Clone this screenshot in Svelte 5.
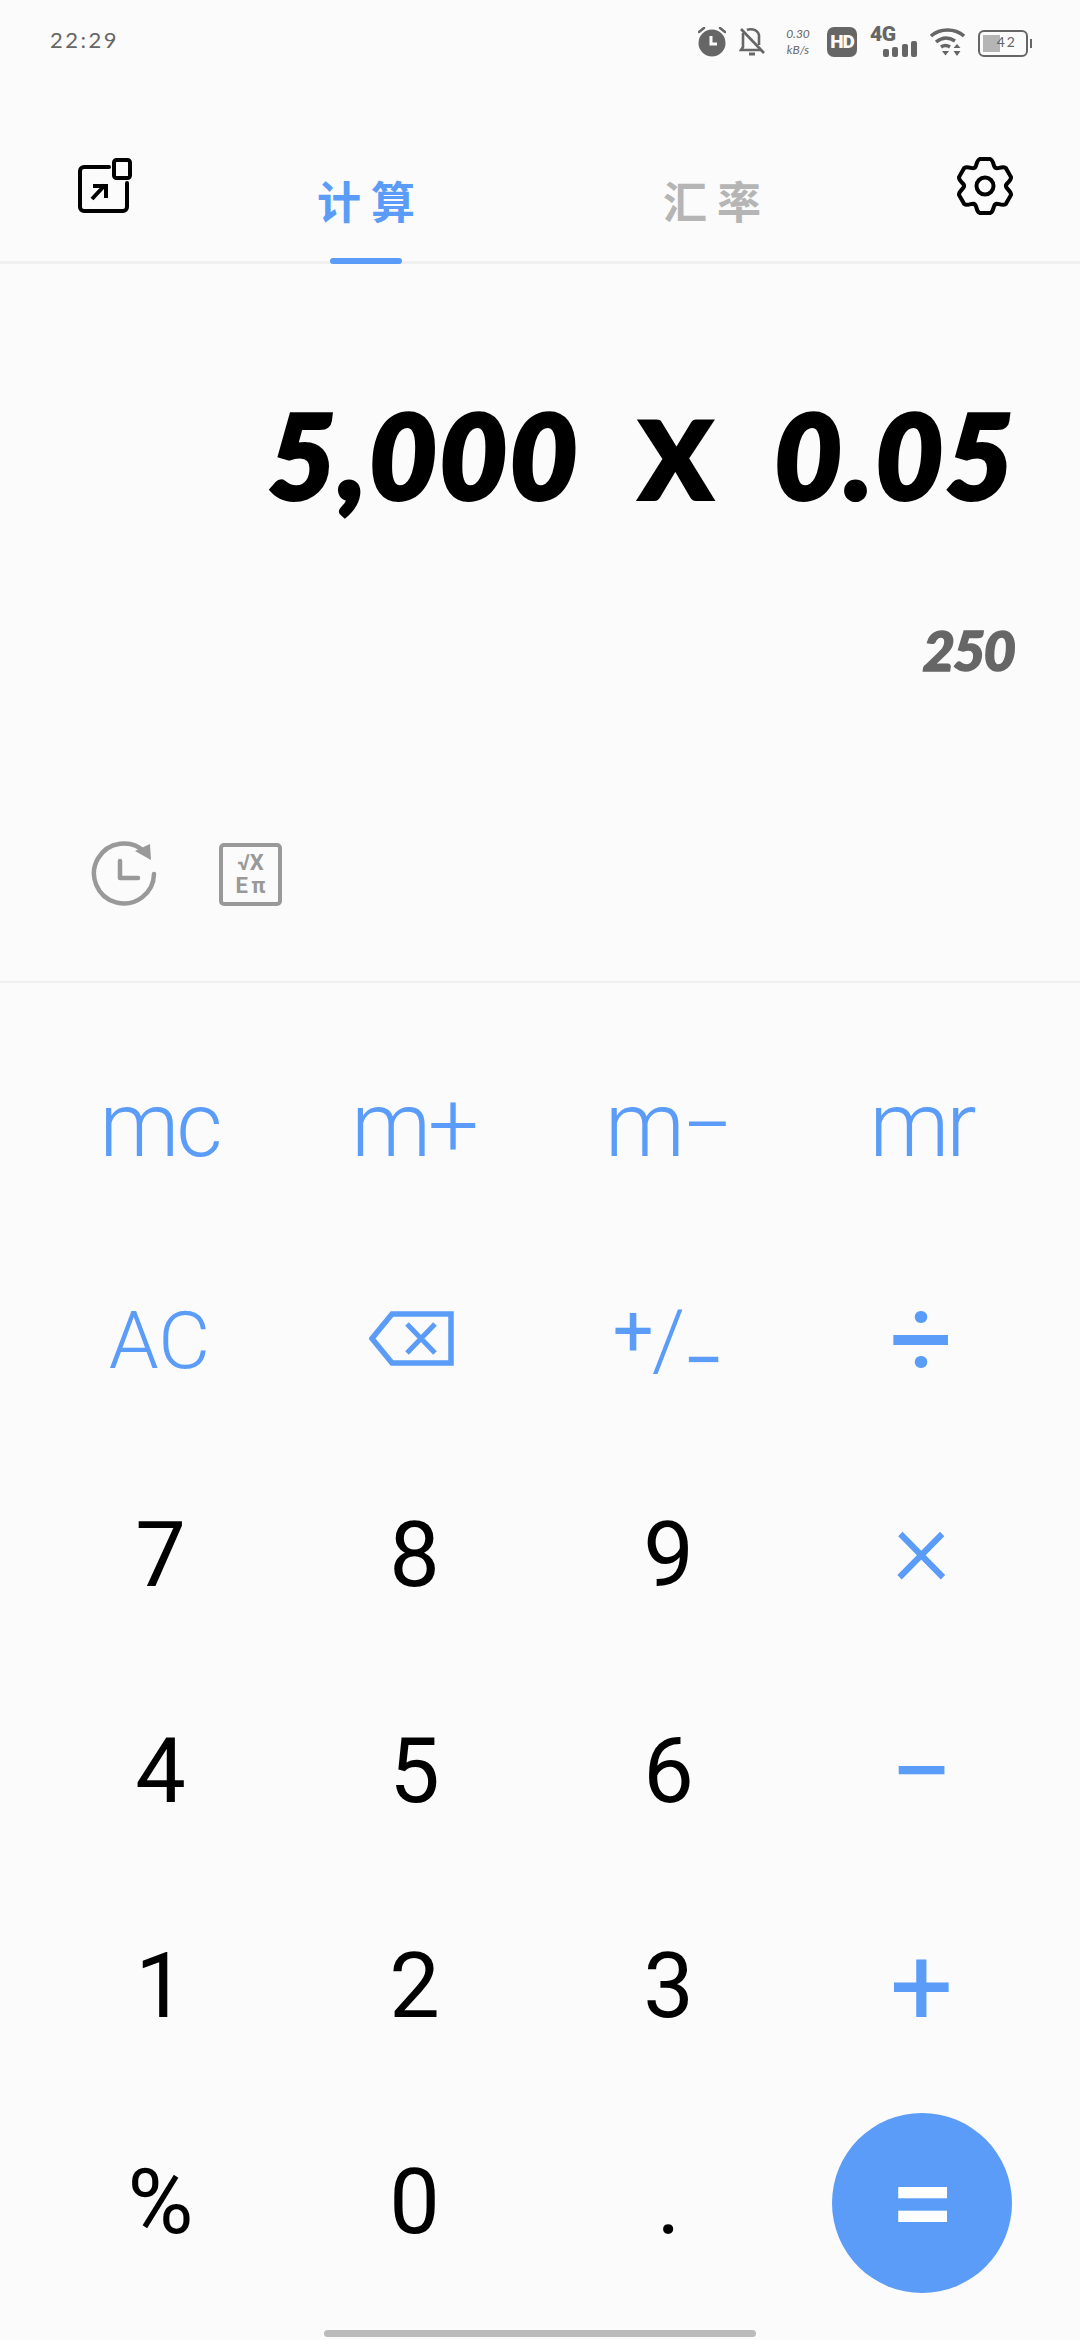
<script>
  const rows = [
    [['mc', 'blue thin'], ['m+', 'blue thin'], ['m−', 'blue thin'], ['mr', 'blue thin']],
    [['AC', 'blue ac'], ['back', 'blue'], ['sign', 'blue'], ['÷', 'blue op divide']],
    [['7', ''], ['8', ''], ['9', ''], ['×', 'blue op times']],
    [['4', ''], ['5', ''], ['6', ''], ['−', 'blue op']],
    [['1', ''], ['2', ''], ['3', ''], ['+', 'blue op']],
    [['%', ''], ['0', ''], ['.', ''], ['=', 'equals']]
  ];

  const polar = (deg, r) => {
    const a = (deg * Math.PI) / 180;
    return `${(30 + r * Math.cos(a)).toFixed(2)} ${(30 + r * Math.sin(a)).toFixed(2)}`;
  };

  // six rounded teeth, one pointing straight up
  let gear = `M${polar(-120, 21)}`;
  for (let i = 0; i < 6; i++) {
    const a = -90 + i * 60;
    gear += ` C${polar(a - 24, 20)} ${polar(a - 20, 27)} ${polar(a - 11, 27.5)}`;
    gear += ` L${polar(a + 11, 27.5)}`;
    gear += ` C${polar(a + 20, 27)} ${polar(a + 24, 20)} ${polar(a + 30, 21)}`;
  }
  gear += ' Z';
</script>

<div class="screen">
  <div class="status">
    <span class="time">22:29</span>
    <div class="status-icons">
      <svg width="28" height="30" viewBox="0 0 28 30">
        <circle cx="14" cy="16" r="13.5" fill="#666" />
        <path d="M1 5l5-4M27 5l-5-4" stroke="#666" stroke-width="2.5" stroke-linecap="round" />
        <path d="M13 9v8h6" stroke="#fbfbfb" stroke-width="3" fill="none" />
      </svg>
      <svg width="26" height="30" viewBox="0 0 26 30" fill="none" stroke="#666" stroke-width="2.6">
        <path d="M4 6v14l-2 3h20M8 3c2-1 10-2 12 5v10" />
        <path d="M2 2l23 24" />
        <path d="M10 27h6" stroke-width="3" />
      </svg>
      <div class="speed"><span>0.30</span><span>kB/s</span></div>
      <div class="hd">HD</div>
      <div class="net">
        <span class="four-g">4G</span>
        <div class="bars">
          <i style="height: 8px"></i>
          <i style="height: 10px"></i>
          <i style="height: 13px"></i>
          <i style="height: 16px"></i>
        </div>
      </div>
      <svg width="35" height="30" viewBox="0 0 35 30" fill="none" stroke="#666" stroke-width="3.4">
        <path d="M1 9c9-8 24-8 33 0M6 15c6-5 13-5 19-1M11 20c3-2 6-2 9 0" />
        <path d="M12 24h7l-3.5 4.500z" fill="#666" stroke="none" />
        <path d="M27 17l3.500 4h-7zM23.500 24h7l-3.500 5z" fill="#666" stroke="none" />
      </svg>
      <div class="battery">
        <div class="cell"><div class="level"></div><span>42</span></div>
        <div class="nub"></div>
      </div>
    </div>
  </div>

  <header>
    <svg class="float-icon" width="54" height="55" viewBox="0 0 54 55" fill="none" stroke="#000" stroke-width="4">
      <path d="M31 9H6a4 4 0 0 0-4 4v36a4 4 0 0 0 4 4h39a4 4 0 0 0 4-4V25" stroke-linecap="round" />
      <rect x="36" y="2" width="16" height="18" rx="2.500" />
      <path d="M14 41l13-14M15 28h13v12" />
    </svg>
    <div class="tab active">
      <span class="tab-label">计算</span>
      <div class="indicator"></div>
    </div>
    <div class="tab">
      <span class="tab-label">汇率</span>
    </div>
    <svg class="gear" width="60" height="60" viewBox="0 0 60 60" fill="none" stroke="#000" stroke-width="4">
      <path d={gear} />
      <circle cx="30" cy="30" r="8.500" />
    </svg>
  </header>

  <section class="display">
    <div class="expression">5,000 <span class="multiply">X</span> 0.05</div>
    <div class="result">250</div>
    <div class="tools">
      <svg width="66" height="66" viewBox="0 0 66 66" fill="none" stroke="#999" stroke-width="4.500">
        <path d="M63 33a30 30 0 1 1-9-22" stroke-linecap="round" />
        <path d="M60 19l-1-16-15 7z" fill="#999" stroke="none" />
        <path d="M29 20v17h18" stroke-width="4.500" stroke-linecap="round" stroke-linejoin="round" />
      </svg>
      <div class="formula"><span>√X</span><span>E π</span></div>
    </div>
  </section>

  <section class="keys">
    {#each rows as row}
      {#each row as [label, kind]}
        <div class="key {kind}">
          {#if label === 'back'}
            <svg class="back" width="85" height="55" viewBox="0 0 85 55" fill="none" stroke="#5a9cf8" stroke-width="5.500">
              <path d="M23 3h59v49H23L3 27.500z" />
              <path d="M38 13l28 29M66 13L38 42" stroke-width="5" />
            </svg>
          {:else if label === 'sign'}
            <span class="sign"><span class="up">+</span><span class="slash">/</span><span class="down">−</span></span>
          {:else if label === '='}
            <div class="circle">=</div>
          {:else}
            {label}
          {/if}
        </div>
      {/each}
    {/each}
  </section>

  <div class="home-bar"></div>
</div>

<style>
  :global(body) {
    margin: 0;
    background: #fbfbfb;
  }

  .screen {
    width: 1080px;
    height: 2340px;
    background: #fbfbfb;
    font-family: Roboto, "Noto Sans CJK SC", sans-serif;
    overflow: hidden;
    position: relative;
  }

  .status {
    height: 80px;
    box-sizing: border-box;
    padding: 27px 48px 0 50px;
    display: flex;
    justify-content: space-between;
    align-items: flex-start;
    color: #666;
  }

  .time {
    font-family: Lato, sans-serif;
    font-size: 22px;
    font-weight: 400;
    letter-spacing: 2.5px;
    line-height: 26px;
  }

  .status-icons {
    display: flex;
    height: 30px;
  }

  .status-icons > * {
    flex: none;
    margin-left: 13px;
  }

  .speed {
    width: 30px;
    margin-left: 18px;
    display: flex;
    flex-direction: column;
    justify-content: space-between;
    align-items: center;
    font-family: Lato, sans-serif;
    font-size: 12px;
    line-height: 14px;
    font-style: italic;
    height: 30px;
  }

  .hd {
    width: 30px;
    height: 30px;
    margin-left: 14px;
    border-radius: 7px;
    background: #666;
    color: #fbfbfb;
    font-size: 19px;
    font-weight: 900;
    line-height: 30px;
    text-align: center;
    letter-spacing: -1px;
  }

  .net {
    width: 47px;
    height: 30px;
    position: relative;
  }

  .four-g {
    position: absolute;
    left: 0;
    top: -4px;
    font-size: 21px;
    font-weight: 900;
    line-height: 22px;
    letter-spacing: -0.5px;
  }

  .bars {
    position: absolute;
    right: 0;
    bottom: 0;
    display: flex;
    align-items: flex-end;
    gap: 3.500px;
  }

  .bars i {
    width: 6px;
    background: #666;
    border-radius: 2px;
  }

  .battery {
    display: flex;
    align-items: center;
    gap: 2px;
    width: 54px;
    height: 28px;
    margin-top: 2px;
  }

  .cell {
    width: 50px;
    height: 27px;
    box-sizing: border-box;
    border: 2.500px solid #666;
    border-radius: 6px;
    position: relative;
    font-size: 14px;
    line-height: 20px;
    text-align: right;
    padding-right: 9px;
    letter-spacing: 2px;
    font-family: Lato, sans-serif;
  }

  .level {
    position: absolute;
    left: 3px;
    top: 3px;
    bottom: 3px;
    width: 17px;
    background: #b5b5b5;
  }

  .cell span {
    position: relative;
  }

  .nub {
    width: 2px;
    height: 9px;
    background: #666;
  }

  header {
    height: 184px;
    box-sizing: border-box;
    border-bottom: 3px solid #f0f0f0;
    display: flex;
    padding-left: 78px;
  }

  .float-icon {
    flex: none;
    margin: 78px 61px 0 0;
  }

  .gear {
    flex: none;
    margin: 76px 0 0 70px;
  }

  .tab {
    width: 346px;
    display: flex;
    flex-direction: column;
    align-items: center;
    color: #b5b5b5;
  }

  .tab.active {
    color: #5a9cf8;
  }

  .tab-label {
    margin-top: 96px;
    font-size: 44px;
    font-weight: 700;
    line-height: 56px;
    letter-spacing: 10px;
    margin-right: -10px;
  }

  .indicator {
    width: 72px;
    height: 6px;
    border-radius: 3px;
    background: #5a9cf8;
    margin-top: auto;
    margin-bottom: -3px;
  }

  .display {
    height: 719px;
    box-sizing: border-box;
    border-bottom: 2px solid #f0f0f0;
    display: flex;
    flex-direction: column;
    align-items: flex-end;
    padding: 116px 64px 0 0;
  }

  .expression {
    font-family: Lato, sans-serif;
    font-size: 116px;
    font-style: italic;
    font-weight: 900;
    line-height: 150px;
    letter-spacing: 3px;
    word-spacing: 32px;
    white-space: nowrap;
    color: #000;
    -webkit-text-stroke: 4px #000;
  }

  .multiply {
    font-size: 106px;
    font-style: normal;
  }

  .result {
    margin-top: 82px;
    margin-right: 2px;
    font-family: Lato, sans-serif;
    font-size: 56px;
    font-style: italic;
    font-weight: 900;
    line-height: 70px;
    letter-spacing: -2px;
    color: #666;
    -webkit-text-stroke: 1.500px #666;
  }

  .tools {
    align-self: flex-start;
    margin: 156px 0 0 91px;
    display: flex;
    align-items: center;
    gap: 62px;
  }

  .formula {
    width: 63px;
    height: 63px;
    box-sizing: border-box;
    border: 4px solid #999;
    border-radius: 5px;
    color: #999;
    font-size: 22px;
    font-weight: 700;
    line-height: 23px;
    word-spacing: -2px;
    display: flex;
    flex-direction: column;
    align-items: center;
    justify-content: center;
  }

  .keys {
    padding: 35px 0 0 32.500px;
    display: grid;
    grid-template-columns: repeat(4, 254px);
    grid-auto-rows: 215.400px;
  }

  .key {
    display: flex;
    align-items: center;
    justify-content: center;
    box-sizing: border-box;
    font-size: 90px;
    font-weight: 400;
    letter-spacing: -2px;
    line-height: 1;
    color: #000;
  }

  .blue {
    color: #5a9cf8;
  }

  .thin {
    font-weight: 300;
    letter-spacing: -3px;
  }

  .ac {
    font-size: 80px;
    font-weight: 300;
    letter-spacing: 0;
  }

  .op {
    font-size: 112px;
    letter-spacing: 0;
  }

  .divide {
    padding-bottom: 4px;
  }

  .times {
    font-weight: 300;
    padding-bottom: 18px;
  }

  .back {
    margin: 0 4px 5px 0;
  }

  .sign {
    display: flex;
    align-items: center;
    font-size: 72px;
  }

  .sign .up {
    transform: translateY(-10px);
  }

  .sign .slash {
    font-size: 84px;
    font-weight: 300;
  }

  .sign .down {
    transform: translateY(20px);
  }

  .circle {
    width: 180px;
    height: 180px;
    border-radius: 50%;
    background: #5a9cf8;
    color: #fff;
    font-size: 115px;
    font-weight: 500;
    display: flex;
    align-items: center;
    justify-content: center;
  }

  .home-bar {
    position: absolute;
    left: 324px;
    top: 2330px;
    width: 432px;
    height: 7px;
    border-radius: 4px;
    background: #bbb;
  }
</style>
